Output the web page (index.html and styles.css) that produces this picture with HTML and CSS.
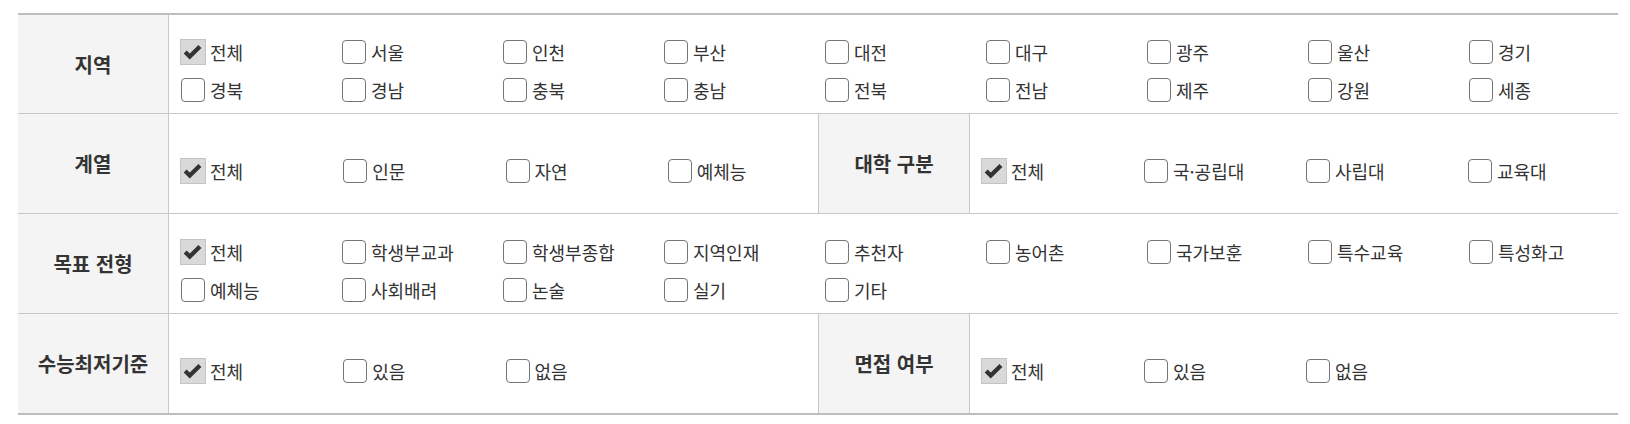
FILE: index.html
```html
<!DOCTYPE html>
<html lang="ko">
<head>
<meta charset="utf-8">
<title>검색 필터</title>
<link rel="stylesheet" href="styles.css">
</head>
<body>
<div class="wrap">
  <div class="filter">
    <div class="row row-first">
      <div class="th">지역</div>
      <div class="td">
        <div class="opts opts-9">
          <label class="opt"><span class="box on"><svg viewBox="0 0 26 26"><polyline points="4.5,13 9.5,18 20.5,7"/></svg></span><span class="txt">전체</span></label>
          <label class="opt"><span class="box"></span><span class="txt">서울</span></label>
          <label class="opt"><span class="box"></span><span class="txt">인천</span></label>
          <label class="opt"><span class="box"></span><span class="txt">부산</span></label>
          <label class="opt"><span class="box"></span><span class="txt">대전</span></label>
          <label class="opt"><span class="box"></span><span class="txt">대구</span></label>
          <label class="opt"><span class="box"></span><span class="txt">광주</span></label>
          <label class="opt"><span class="box"></span><span class="txt">울산</span></label>
          <label class="opt"><span class="box"></span><span class="txt">경기</span></label>
          <label class="opt"><span class="box"></span><span class="txt">경북</span></label>
          <label class="opt"><span class="box"></span><span class="txt">경남</span></label>
          <label class="opt"><span class="box"></span><span class="txt">충북</span></label>
          <label class="opt"><span class="box"></span><span class="txt">충남</span></label>
          <label class="opt"><span class="box"></span><span class="txt">전북</span></label>
          <label class="opt"><span class="box"></span><span class="txt">전남</span></label>
          <label class="opt"><span class="box"></span><span class="txt">제주</span></label>
          <label class="opt"><span class="box"></span><span class="txt">강원</span></label>
          <label class="opt"><span class="box"></span><span class="txt">세종</span></label>
        </div>
      </div>
    </div>

    <div class="row">
      <div class="th">계열</div>
      <div class="td td-half">
        <div class="opts opts-4">
          <label class="opt"><span class="box on"><svg viewBox="0 0 26 26"><polyline points="4.5,13 9.5,18 20.5,7"/></svg></span><span class="txt">전체</span></label>
          <label class="opt"><span class="box"></span><span class="txt">인문</span></label>
          <label class="opt"><span class="box"></span><span class="txt">자연</span></label>
          <label class="opt"><span class="box"></span><span class="txt">예체능</span></label>
        </div>
      </div>
      <div class="th th-mid">대학 구분</div>
      <div class="td">
        <div class="opts opts-4">
          <label class="opt"><span class="box on"><svg viewBox="0 0 26 26"><polyline points="4.5,13 9.5,18 20.5,7"/></svg></span><span class="txt">전체</span></label>
          <label class="opt"><span class="box"></span><span class="txt">국·공립대</span></label>
          <label class="opt"><span class="box"></span><span class="txt">사립대</span></label>
          <label class="opt"><span class="box"></span><span class="txt">교육대</span></label>
        </div>
      </div>
    </div>

    <div class="row">
      <div class="th">목표 전형</div>
      <div class="td">
        <div class="opts opts-9">
          <label class="opt"><span class="box on"><svg viewBox="0 0 26 26"><polyline points="4.5,13 9.5,18 20.5,7"/></svg></span><span class="txt">전체</span></label>
          <label class="opt"><span class="box"></span><span class="txt">학생부교과</span></label>
          <label class="opt"><span class="box"></span><span class="txt">학생부종합</span></label>
          <label class="opt"><span class="box"></span><span class="txt">지역인재</span></label>
          <label class="opt"><span class="box"></span><span class="txt">추천자</span></label>
          <label class="opt"><span class="box"></span><span class="txt">농어촌</span></label>
          <label class="opt"><span class="box"></span><span class="txt">국가보훈</span></label>
          <label class="opt"><span class="box"></span><span class="txt">특수교육</span></label>
          <label class="opt"><span class="box"></span><span class="txt">특성화고</span></label>
          <label class="opt"><span class="box"></span><span class="txt">예체능</span></label>
          <label class="opt"><span class="box"></span><span class="txt">사회배려</span></label>
          <label class="opt"><span class="box"></span><span class="txt">논술</span></label>
          <label class="opt"><span class="box"></span><span class="txt">실기</span></label>
          <label class="opt"><span class="box"></span><span class="txt">기타</span></label>
        </div>
      </div>
    </div>

    <div class="row row-last">
      <div class="th">수능최저기준</div>
      <div class="td td-half">
        <div class="opts opts-4">
          <label class="opt"><span class="box on"><svg viewBox="0 0 26 26"><polyline points="4.5,13 9.5,18 20.5,7"/></svg></span><span class="txt">전체</span></label>
          <label class="opt"><span class="box"></span><span class="txt">있음</span></label>
          <label class="opt"><span class="box"></span><span class="txt">없음</span></label>
        </div>
      </div>
      <div class="th th-mid">면접 여부</div>
      <div class="td">
        <div class="opts opts-4">
          <label class="opt"><span class="box on"><svg viewBox="0 0 26 26"><polyline points="4.5,13 9.5,18 20.5,7"/></svg></span><span class="txt">전체</span></label>
          <label class="opt"><span class="box"></span><span class="txt">있음</span></label>
          <label class="opt"><span class="box"></span><span class="txt">없음</span></label>
        </div>
      </div>
    </div>
  </div>
</div>
</body>
</html>
```

FILE: styles.css
```css
html, body {
  margin: 0;
  padding: 0;
  background: #ffffff;
}

body {
  font-family: "Noto Sans CJK KR", "Noto Sans", sans-serif;
  color: #333333;
}

.wrap {
  padding: 13px 0 0 18px;
}

.filter {
  width: 1600px;
  border-top: 2px solid #bdbdbd;
  border-bottom: 2px solid #bdbdbd;
}

.row {
  display: flex;
  border-top: 1px solid #c8c8c8;
}

.row-first {
  border-top: 0;
}

.th {
  width: 150px;
  flex: 0 0 150px;
  border-right: 1px solid #c8c8c8;
  background: #f4f4f4;
  display: flex;
  align-items: center;
  justify-content: center;
  font-size: 20px;
  font-weight: 700;
  color: #333333;
  letter-spacing: 0;
}

.th-mid {
  flex: 0 0 150px;
  border-left: 1px solid #c8c8c8;
}

.td {
  flex: 1 1 0;
  min-width: 0;
  min-height: 65px;
  padding: 24px 0 10px 0;
  display: flex;
  align-items: center;
}

.row-first .td {
  min-height: 64px;
}

.td-half {
  flex: 0 0 649px;
  width: 649px;
}

.opts {
  width: 100%;
  display: grid;
  row-gap: 12px;
}

.opts-9 {
  grid-template-columns: repeat(9, 1fr);
}

.opts-4 {
  grid-template-columns: repeat(4, 1fr);
}

.opt {
  display: flex;
  align-items: center;
  height: 26px;
  padding-left: 11px;
  white-space: nowrap;
}

.box {
  width: 24px;
  height: 24px;
  margin: 0 1px;
  box-sizing: border-box;
  border: 1px solid #767676;
  border-radius: 4px;
  background: #ffffff;
  flex: 0 0 auto;
}

.box.on {
  width: 26px;
  height: 26px;
  margin: 0;
  border: 1px solid #c4c4c4;
  border-radius: 0;
  background: #d9d9d9;
}

.box svg {
  display: block;
  width: 24px;
  height: 24px;
}

.box polyline {
  fill: none;
  stroke: #333333;
  stroke-width: 4.6;
  stroke-linecap: butt;
  stroke-linejoin: miter;
}

.txt {
  margin-left: 4px;
  font-size: 18px;
  line-height: 26px;
  color: #333333;
}
```
